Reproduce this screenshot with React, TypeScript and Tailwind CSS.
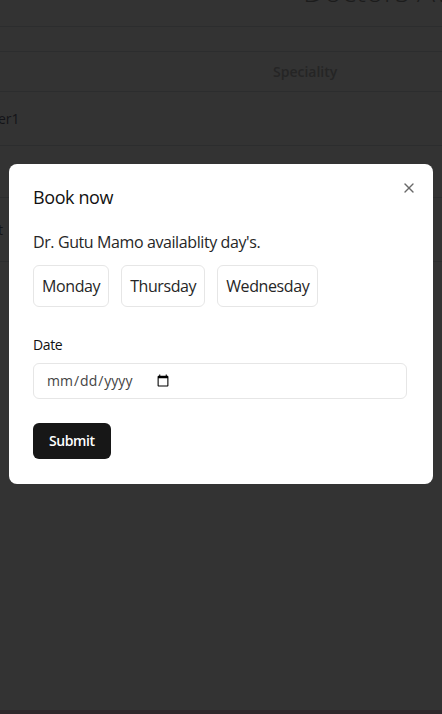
import React from "react";
import { X } from "lucide-react";

const days = ["Monday", "Thursday", "Wednesday"];

function BackgroundPage() {
  return (
    <div className="flex flex-col h-[714px] bg-[#333333] overflow-hidden">
      <div className="h-[27px] shrink-0 border-b border-[#2c2d2e]">
        <h1 className="-mt-[24px] ml-[303px] whitespace-nowrap text-[30px] leading-none font-light text-[#1c1c1c]">
          Doctors Available
        </h1>
      </div>
      <div className="h-[25px] shrink-0 border-b border-[#2c2d2e]" />
      <div className="flex items-center h-[40px] shrink-0 border-b border-[#2c2d2e]">
        <span className="ml-[273px] text-sm font-semibold text-[#252525]">
          Speciality
        </span>
      </div>
      <div className="flex items-center h-[54px] shrink-0 border-b border-[#2c2d2e]">
        <span className="-ml-[2px] text-sm text-[#141418]">er1</span>
      </div>
      <div className="h-[52px] shrink-0 border-b border-[#2c2d2e]" />
      <div className="flex items-center h-[64px] shrink-0 border-b border-[#2c2d2e]">
        <span className="-ml-[2px] text-sm text-[#141418]">t</span>
      </div>
      <div className="flex-1" />
      <div className="h-[4px] shrink-0 bg-[#2f282b]" />
    </div>
  );
}

function BookDialog() {
  return (
    <div className="absolute left-[9px] top-[164px] w-[424px] rounded-lg bg-white px-6 pt-6 pb-[25px] tracking-[-0.025em]">
      <button className="absolute right-4 top-4 text-[#444] opacity-80">
        <X className="h-4 w-4" strokeWidth={2} />
      </button>
      <h2 className="text-lg leading-none font-medium text-[#111]">Book now</h2>
      <p className="mt-6 text-base leading-6 text-[#262626]">
        Dr. Gutu Mamo availablity day's.
      </p>
      <div className="mt-[11px] flex gap-3">
        {days.map((d) => (
          <button
            key={d}
            className="rounded-md border border-[#e6e6e6] px-2 py-2 text-base leading-6 text-[#262626]"
          >
            {d}
          </button>
        ))}
      </div>
      <label className="mt-[28px] block text-sm leading-5 font-medium text-[#111]">
        Date
      </label>
      <input
        type="date"
        className="mt-2 flex h-9 w-[374px] rounded-md border border-[#e6e6e6] px-3 text-sm text-[#444] tracking-normal"
      />
      <button className="mt-6 h-9 rounded-md bg-[#171717] px-4 text-sm font-semibold text-white">
        Submit
      </button>
    </div>
  );
}

export default function App() {
  return (
    <div className="relative h-[714px] w-[442px] overflow-hidden font-['Open_Sans',sans-serif]">
      <BackgroundPage />
      <BookDialog />
    </div>
  );
}
